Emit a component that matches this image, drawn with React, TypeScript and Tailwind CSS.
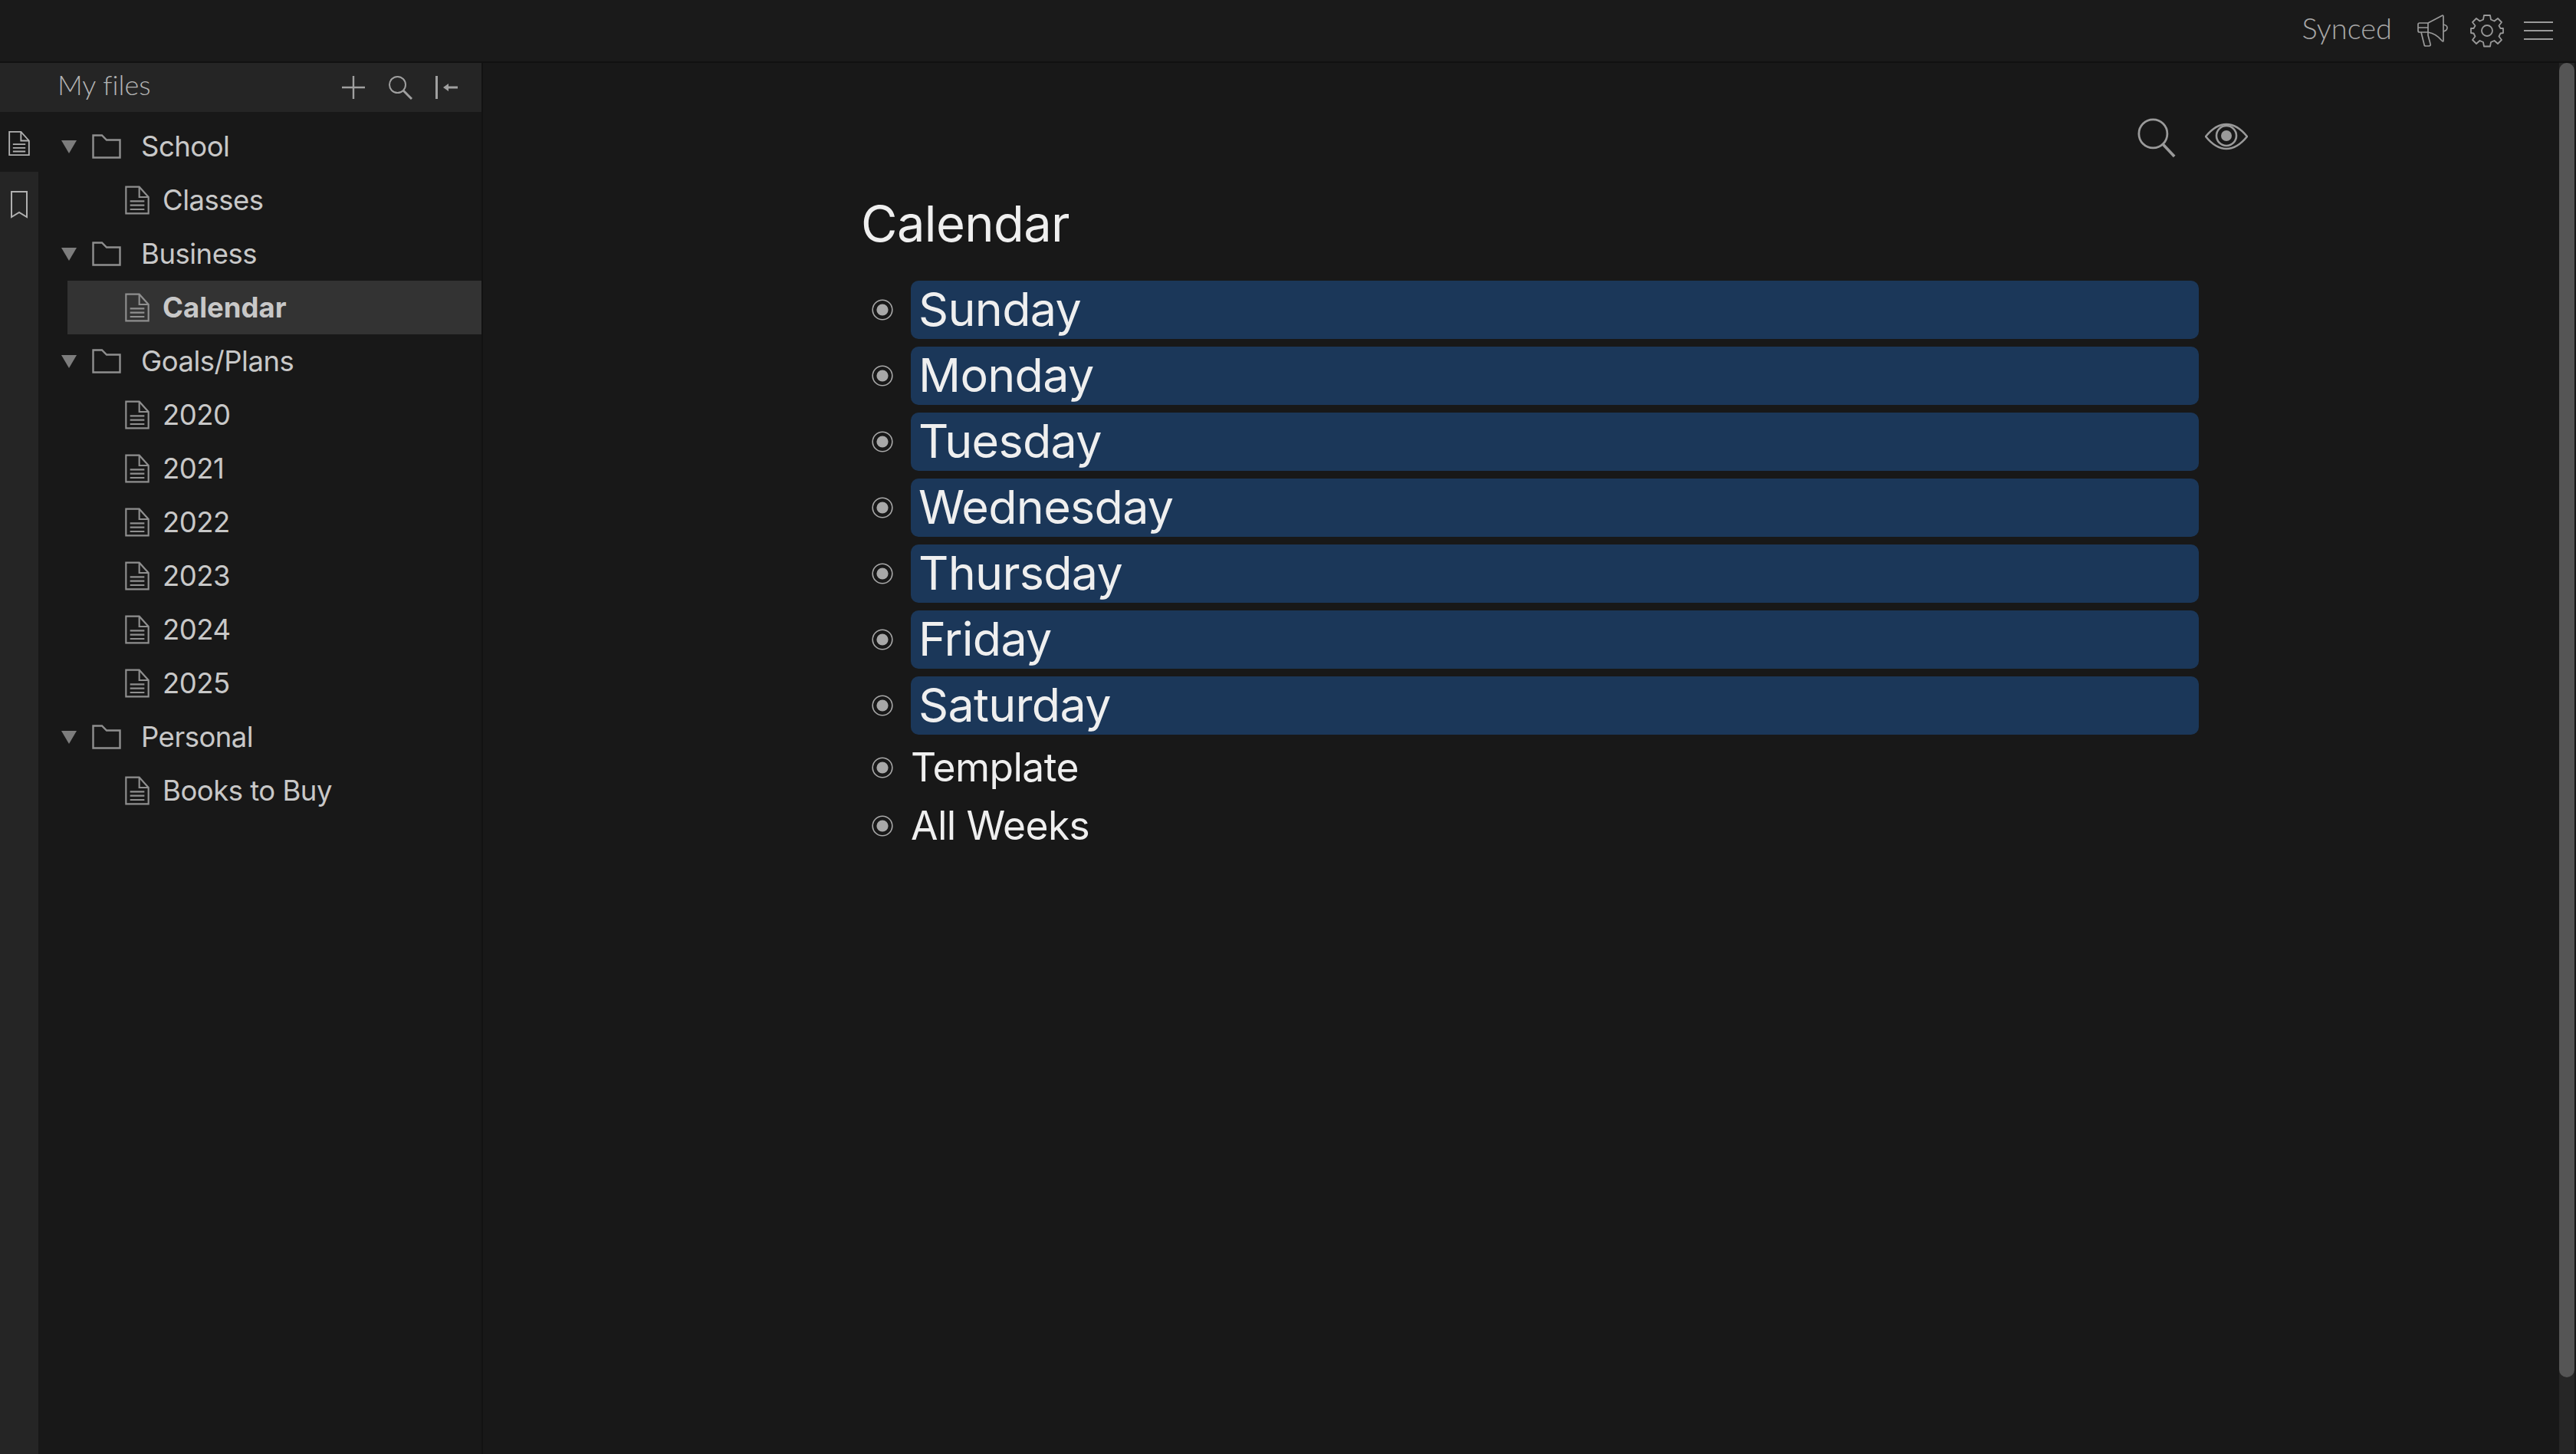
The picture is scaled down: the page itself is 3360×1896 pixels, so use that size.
import React from "react";

const stroke = "#9a9a9a";

function FileIcon({ w = 32, h = 38, color = "#8f8f8f" }: { w?: number; h?: number; color?: string }) {
  return (
    <svg width={w} height={h} viewBox="0 0 24 28" fill="none" stroke={color} strokeWidth="1.6">
      <path d="M1 1 H14 L23 11 V27 H1 Z" />
      <path d="M14 1 V11 H23" />
      <path d="M5 15 H19 M5 19 H19 M5 23 H19" />
    </svg>
  );
}

function FolderIcon() {
  return (
    <svg width="38" height="32" viewBox="0 0 38 32" fill="none" stroke="#8f8f8f" strokeWidth="2.4">
      <path d="M1.5 1.5 H13 L19 7.5 H36.5 V30.5 H1.5 Z" />
    </svg>
  );
}

function Caret() {
  return (
    <svg width="20" height="18" viewBox="0 0 20 18" fill="#7d7d7d">
      <path d="M0 1 H20 L10 18 Z" />
    </svg>
  );
}

function Bullet() {
  return (
    <svg width="28" height="28" viewBox="0 0 28 28" className="shrink-0">
      <circle cx="14" cy="14" r="12.8" fill="none" stroke="#a8a8a8" strokeWidth="1.6" />
      <circle cx="14" cy="14" r="7.6" fill="#a8a8a8" />
    </svg>
  );
}

function Folder({ name }: { name: string }) {
  return (
    <div className="flex h-[70px] items-center pl-[30px] text-[36.5px] tracking-[-0.5px] text-[#c8c8c8] font-['Inter'] font-normal">
      <Caret />
      <span className="ml-[20px] flex"><FolderIcon /></span>
      <span className="ml-[26px]">{name}</span>
    </div>
  );
}

function Doc({ name, active }: { name: string; active?: boolean }) {
  return (
    <div className={`ml-[38px] flex h-[70px] items-center pl-[75px] text-[36.5px] font-['Inter'] ${active ? "bg-[#333333] font-bold text-[#c8c8c8]" : "font-normal tracking-[-0.5px] text-[#c8c8c8]"}`}>
      <FileIcon />
      <span className="ml-[17px]">{name}</span>
    </div>
  );
}

function Day({ name }: { name: string }) {
  return (
    <div className="flex h-[86px] items-center pl-[12px]">
      <Bullet />
      <div className="ml-[23px] flex h-[76px] flex-1 items-center rounded-[10px] bg-[#1b3759] pl-[10px] text-[61px] tracking-[-0.7px] text-[#efefef] font-['Inter'] font-normal">
        {name}
      </div>
    </div>
  );
}

function Plain({ name }: { name: string }) {
  return (
    <div className="flex h-[76px] items-center pl-[12px]">
      <Bullet />
      <div className="ml-[23px] text-[51.5px] tracking-[-0.6px] text-[#efefef] font-['Inter'] font-normal">{name}</div>
    </div>
  );
}

export default function App() {
  return (
    <div className="flex h-[1896px] w-[3360px] flex-col overflow-hidden bg-[#181818]">
      <header className="flex h-[82px] shrink-0 items-center justify-end border-b-2 border-[#111111] bg-[#1a1a1a]">
        <span className="mb-[8px] mr-[32px] text-[38px] font-light text-[#a8a8a8] font-['Lato']">Synced</span>
        <svg width="42" height="42" viewBox="0 0 42 42" fill="none" stroke={stroke} strokeWidth="1.7" strokeLinejoin="round" className="mr-[28px]">
          <path d="M2 13 Q2 11 4 11 H15 L34 1 Q35 1 35 3 L35 34 Q35 36 33 34 Q26 25 15 23 H4 Q2 23 2 21 Z" />
          <path d="M15 11 V23 M2 17 H15" />
          <path d="M6 23 L10 39 Q10 41 12 41 H16 Q19 41 18 38 L15 27 V23" />
          <path d="M35 13 Q40 14 40 17 Q40 21 35 22" />
        </svg>
        <svg width="44" height="44" viewBox="0 0 44 44" fill="none" stroke={stroke} strokeWidth="1.8" strokeLinejoin="round" className="mr-[26px]">
          <circle cx="22" cy="22" r="7" />
          <path d="M18 2 H26 L27 7.5 L31.5 9.5 L36 6 L41 11 L37.5 15.5 L39.5 19 L43 19 V25 L39.5 25.5 L37.5 29.5 L41 34 L36 39 L31.5 35 L27 37 L26 42.5 H18 L17 37 L12.5 35 L8 39 L3 34 L6.5 29.5 L4.5 25.5 L1 25 V19 L4.5 19 L6.5 15.5 L3 11 L8 6 L12.5 9.5 L17 7.5 Z" />
        </svg>
        <svg width="38" height="26" viewBox="0 0 38 26" stroke={stroke} strokeWidth="2" className="mr-[30px]">
          <path d="M0 2 H38 M0 13 H38 M0 24 H38" />
        </svg>
      </header>
      <div className="flex min-h-0 flex-1">
        <aside className="flex w-[630px] shrink-0 border-r-[2px] border-[#121212] bg-[#181818]">
          <nav className="flex w-[50px] shrink-0 flex-col bg-[#252525]">
            <div className="h-[64px]" />
            <div className="flex h-[78px] items-center justify-center bg-[#181818] pt-[4px]">
              <FileIcon w={28} h={34} color="#b0b0b0" />
            </div>
            <div className="flex h-[78px] items-center justify-center pt-[8px]">
              <svg width="24" height="36" viewBox="0 0 24 36" fill="none" stroke="#b0b0b0" strokeWidth="2">
                <path d="M2 1 H22 V34 L12 28 L2 34 Z" />
              </svg>
            </div>
          </nav>
          <div className="flex min-w-0 flex-1 flex-col">
            <div className="flex h-[64px] shrink-0 items-center bg-[#252525] pl-[25px]">
              <span className="mb-[8px] text-[36px] font-light text-[#b4b4b4] font-['Lato'] [font-variant-ligatures:none]">My files</span>
              <div className="ml-auto flex items-center">
                <svg width="30" height="30" viewBox="0 0 30 30" stroke="#a0a0a0" strokeWidth="2.4"><path d="M15 0 V30 M0 15 H30" /></svg>
                <svg width="32" height="32" viewBox="0 0 32 32" fill="none" stroke="#a0a0a0" strokeWidth="2" className="ml-[30px]">
                  <circle cx="12.5" cy="12.5" r="10.5" /><path d="M20 20 L31 31" strokeWidth="3" />
                </svg>
                <svg width="30" height="30" viewBox="0 0 30 30" fill="#a0a0a0" className="ml-[30px] mr-[30px]">
                  <rect x="0" y="0" width="3" height="30" />
                  <path d="M10 15 L17 10 V13.5 H29 V16.5 H17 V20 Z" />
                </svg>
              </div>
            </div>
            <div className="pt-[10px]">
              <Folder name="School" />
              <Doc name="Classes" />
              <Folder name="Business" />
              <Doc name="Calendar" active />
              <Folder name="Goals/Plans" />
              {["2020", "2021", "2022", "2023", "2024", "2025"].map((y) => (
                <Doc key={y} name={y} />
              ))}
              <Folder name="Personal" />
              <Doc name="Books to Buy" />
            </div>
          </div>
        </aside>
        <main className="min-w-0 flex-1 pl-[495px] pr-[470px]">
          <div className="-mr-[64px] flex h-[132px] items-end justify-end gap-[38px]">
            <svg width="50" height="52" viewBox="0 0 54 56" fill="none" stroke="#9a9a9a" strokeWidth="3" className="mb-[8px]">
              <circle cx="22" cy="22" r="20" /><path d="M36 37 L52 54" strokeWidth="4" />
            </svg>
            <svg width="56" height="36" viewBox="0 0 56 36" fill="none" stroke="#9a9a9a" strokeWidth="2.6" className="mb-[18px]">
              <path d="M1 18 Q14 2 28 2 Q42 2 55 18 Q42 34 28 34 Q14 34 1 18 Z" />
              <circle cx="28" cy="17" r="13" />
              <circle cx="28" cy="17" r="7" fill="#9a9a9a" stroke="none" />
            </svg>
          </div>
          <h1 className="-ml-[2px] mt-[38px] text-[65px] leading-[80px] tracking-[-0.6px] text-[#efefef] font-['Inter'] font-normal">Calendar</h1>
          <div className="mt-[29px]">
            {["Sunday", "Monday", "Tuesday", "Wednesday", "Thursday", "Friday", "Saturday"].map((d) => (
              <Day key={d} name={d} />
            ))}
            <Plain name="Template" />
            <Plain name="All Weeks" />
          </div>
        </main>
        <div className="w-[22px] shrink-0 border-r-2 border-[#181818] bg-[#262626]">
          <div className="h-[1714px] rounded-[10px] bg-[#555555]" />
        </div>
      </div>
    </div>
  );
}
